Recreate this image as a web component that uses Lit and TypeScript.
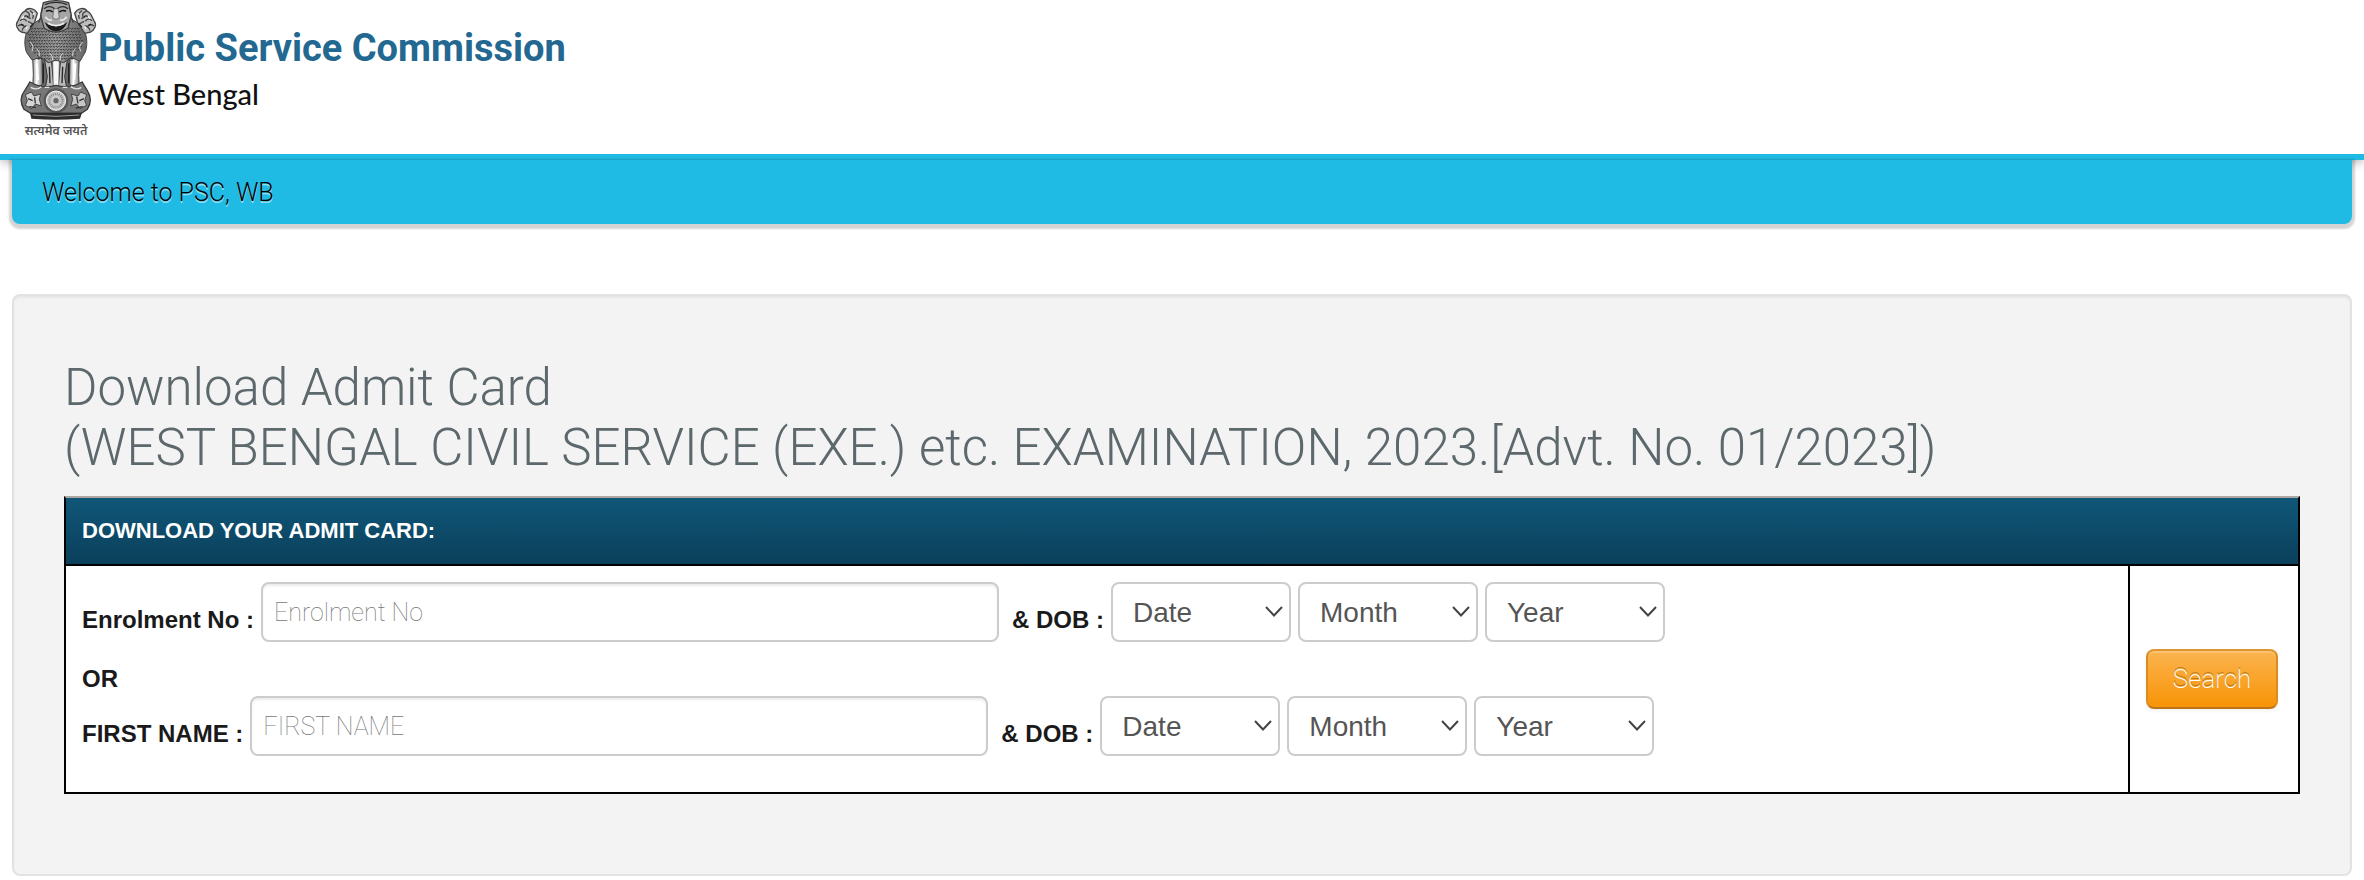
import { LitElement, html, svg, css } from "lit";
import { customElement } from "lit/decorators.js";

const MONTHS = ["01", "02", "03", "04", "05", "06", "07", "08", "09", "10", "11", "12"];
const DAYS = Array.from({ length: 31 }, (_, i) => String(i + 1).padStart(2, "0"));
const YEARS = Array.from({ length: 50 }, (_, i) => String(2005 - i));

// Rows of short curls that fill the mane between the shoulders.
const maneCurls = () => {
  const out: string[] = [];
  for (let row = 0; row < 11; row++) {
    const y = 84 + row * 9;
    const inset = row < 6 ? Math.max(0, 3 - row) * 3 : (row - 5) * 6;
    const shift = row % 2 ? 5 : 0;
    for (let x = 82 + inset + shift; x < 246 - inset; x += 10) {
      out.push(`M${x} ${y}q4 7 8 1`);
    }
  }
  return out.join("");
};

@customElement("state-emblem")
export class StateEmblem extends LitElement {
  static styles = css`
    :host { display: block; }
    svg { display: block; width: 96px; height: 148px; overflow: visible; }
    .motto { font-family: "Noto Sans Devanagari", "Noto Sans", sans-serif; font-size: 37px; font-weight: 600; fill: #555; }
  `;

  private sideLion(flip: boolean) {
    return svg`
      <g transform=${flip ? "translate(336 0) scale(-1 1)" : ""} fill="none" stroke="#444" stroke-width="4">
        <path d="M52 66C46 74 52 90 64 96L82 100L104 66L112 40C102 22 82 22 74 34C62 38 60 52 52 66Z" fill="#bdbdbd" />
        <path d="M76 34q14 2 12 16M60 62q12-10 20 2M54 78q12-8 20 2M66 92q4-14 16-14M90 32q14 8 8 24M84 64l14 8M82 50l10 6" />
        <path d="M72 50q8-6 12 2M62 72l8 4M90 82l10-12" stroke="#222" />
        <path d="M66 56l6-8M78 88l4-10M98 44l6-4" stroke="#f2f2f2" />
      </g>`;
  }

  render() {
    return html`
      <svg viewBox="0 0 288 444" role="img" aria-label="State Emblem of India">
        <defs>
          <linearGradient id="fur" x1="0" x2="1">
            <stop offset="0" stop-color="#6d6d6d" />
            <stop offset=".5" stop-color="#9b9b9b" />
            <stop offset="1" stop-color="#646464" />
          </linearGradient>
          <linearGradient id="leg" x1="0" x2="1">
            <stop offset="0" stop-color="#8d8d8d" />
            <stop offset=".4" stop-color="#fff" />
            <stop offset="1" stop-color="#777" />
          </linearGradient>
        </defs>

        <path d="M104 168L100 262H236L232 168Z" fill="#686868" />
        <path d="M98 170q14 10 28 4l2 76q-8 14-30 14l2-40Z" fill="url(#leg)" stroke="#444" stroke-width="3" />
        <path d="M238 170q-14 10-28 4l-2 76q8 14 30 14l-2-40Z" fill="url(#leg)" stroke="#444" stroke-width="3" />
        <path d="M134 180q14 14 20 0l8 84h-26l6-34Z" fill="#bbb" stroke="#333" stroke-width="3" />
        <path d="M202 180q-14 14-20 0l-8 84h26l-6-34Z" fill="#bbb" stroke="#333" stroke-width="3" />
        <path d="M158 182h20l-2 82h-16Z" fill="#f6f6f6" stroke="#555" stroke-width="2" />
        <path d="M130 190v60M206 190v60M148 200l2 50M188 200l-2 50" stroke="#222" stroke-width="4" />
        <path d="M110 190l4 50M226 190l-4 50" stroke="#fff" stroke-width="7" />

        <path d="M94 74C70 98 72 138 80 158L96 180L122 172L146 188L168 180L190 188L214 172L240 184L256 156C264 132 262 96 242 74L206 52H130Z" fill="url(#fur)" stroke="#444" stroke-width="3" />
        <path d=${maneCurls()} fill="none" stroke="#333" stroke-width="3" />
        <path d="M90 126q14 12 6 28M248 126q-14 12-6 28M110 146q10 8 8 22M226 146q-10 8-8 22M150 160q8 6 8 20M188 160q-8 6-8 20" fill="none" stroke="#dadada" stroke-width="3" />

        ${this.sideLion(false)}
        ${this.sideLion(true)}

        <path d="M130 8Q168-4 206 8L214 46L204 84Q168 108 132 84L122 46Z" fill="#a5a5a5" stroke="#3c3c3c" stroke-width="4" />
        <path d="M134 14q34-14 68 0M132 26q16-12 32 0M172 26q16-12 32 0" fill="none" stroke="#2d2d2d" stroke-width="4" />
        <path d="M138 34q12-6 20 2M178 36q10-8 20-2" fill="none" stroke="#111" stroke-width="5" />
        <path d="M162 26l-4 28q10 8 20 0l-4-28Z" fill="#d2d2d2" stroke="#555" stroke-width="2" />
        <path d="M136 50q8 12 20 10M200 50q-8 12-20 10" fill="none" stroke="#e5e5e5" stroke-width="5" />
        <path d="M134 66Q168 92 202 66Q192 94 168 94Q144 94 134 66Z" fill="#1c1c1c" />
        <path d="M144 70q24 14 48 0" fill="none" stroke="#eee" stroke-width="5" />
        <path d="M124 46l-8 22M212 46l8 22M128 20l-4 20M208 20l4 20" fill="none" stroke="#444" stroke-width="4" />

        <path d="M90 246Q128 268 168 256Q208 268 246 246L262 272Q280 300 262 328L244 340H92L72 328Q54 298 74 272Z" fill="#777" stroke="#3a3a3a" stroke-width="4" />
        <path d="M92 262q18 10 32-2M212 260q18 12 32 2M134 262h14M188 262h14" fill="none" stroke="#e2e2e2" stroke-width="4" />
        <path d="M76 284l18-8 8 12 20-6-4 16 6 20-18-6-10 14-20-10 6-14Z" fill="#d6d6d6" stroke="#444" stroke-width="3" />
        <path d="M260 284l-18-8-8 12-20-6 4 16-6 20 18-6 10 14 20-10-6-14Z" fill="#c6c6c6" stroke="#444" stroke-width="3" />
        <path d="M84 296l14 6M104 292l2 18M252 296l-14 6M230 290l4 20M88 320l20 2M248 320l-20 4" stroke="#333" stroke-width="4" />
        <circle cx="168" cy="302" r="37" fill="#555" />
        <circle cx="168" cy="302" r="29" fill="#c9c9c9" stroke="#efefef" stroke-width="3" />
        <circle cx="168" cy="302" r="20" fill="none" stroke="#858585" stroke-width="7" stroke-dasharray="3 3" />
        <circle cx="168" cy="302" r="8" fill="#666" />
        <path d="M90 338H246L240 356Q168 362 94 356Z" fill="#2c2c2c" />
        <path d="M98 345q70 8 140 0" fill="none" stroke="#999" stroke-width="3" />
        <text class="motto" x="74" y="405">सत्यमेव जयते</text>
      </svg>`;
  }
}

@customElement("dob-fields")
export class DobFields extends LitElement {
  static styles = css`
    :host { display: flex; align-items: flex-end; gap: 7px; }
    .caption { font-weight: 700; line-height: 44px; white-space: nowrap; }
    select {
      appearance: none;
      box-sizing: border-box;
      width: 180px;
      height: 60px;
      padding: 0 40px 0 20px;
      border: 2px solid #ccc;
      border-radius: 8px;
      color: #555;
      font: 28px "Liberation Sans", Arial, sans-serif;
      background: #fff url("data:image/svg+xml,%3Csvg xmlns='http://www.w3.org/2000/svg' width='18' height='12' fill='none' stroke='%23444' stroke-width='2'%3E%3Cpath d='M1 1L9 9.500L17 1'/%3E%3C/svg%3E") no-repeat right 6px center;
    }
  `;

  private list(name: string, values: string[]) {
    return html`<select aria-label=${name}>
      <option>${name}</option>
      ${values.map((v) => html`<option>${v}</option>`)}
    </select>`;
  }

  render() {
    return html`
      <span class="caption">&amp; DOB :</span>
      ${this.list("Date", DAYS)} ${this.list("Month", MONTHS)} ${this.list("Year", YEARS)}
    `;
  }
}

@customElement("app-root")
export class AppRoot extends LitElement {
  static styles = css`
    :host {
      display: block;
      background: #fff;
      color: #1a1a1a;
      font: 24px "Liberation Sans", Arial, sans-serif;
    }
    .masthead {
      display: flex;
      gap: 2px;
      height: 154px;
      border-bottom: 6px solid #1fbbe4;
      box-shadow: 0 2px 10px rgba(0, 0, 0, 0.3);
    }
    .names { padding-top: 25px; }
    .org { color: #226891; font: 700 38px/46px Roboto, sans-serif; }
    .state { color: #111; font: 500 29px/46px Lato, sans-serif; }
    .content { position: relative; padding: 0 12px 4px; }
    .welcome {
      padding: 2px 30px 0;
      border-radius: 0 0 8px 8px;
      background: #1fbbe4;
      box-shadow: 0 2px 2px 3px rgba(0, 0, 0, 0.17);
      color: #000;
      font: 300 25px/62px Roboto, sans-serif;
      text-shadow: 0 2px 0 rgba(255, 255, 255, 0.5);
    }
    .panel {
      margin-top: 70px;
      padding: 62px 50px 80px;
      border: 2px solid #e2e2e2;
      border-radius: 8px;
      background: #f3f3f3;
      box-shadow: inset 0 2px 2px rgba(0, 0, 0, 0.05);
    }
    h1 {
      margin: 0 0 18px;
      color: #5c686c;
      font: 300 51px/60px Roboto, sans-serif;
    }
    .card {
      border: 2px solid #000;
      border-top-color: #aea79f;
      background: #fff;
    }
    h2 {
      margin: 0;
      padding: 16px;
      border-bottom: 2px solid #000;
      background: linear-gradient(#105678, #0a405b);
      color: #fff;
      font-size: 22px;
      line-height: 34px;
    }
    form { display: grid; grid-template-columns: 1fr 170px; }
    .fields { padding: 16px 16px 36px; }
    .row { display: flex; align-items: flex-end; }
    label { margin-right: 7px; font-weight: 700; line-height: 44px; white-space: nowrap; }
    .or { margin-top: 20px; font-weight: 700; line-height: 34px; }
    input {
      box-sizing: border-box;
      flex: 0 1 738px;
      min-width: 0;
      height: 60px;
      margin-right: 13px;
      padding: 0 11px;
      border: 2px solid #ccc;
      border-radius: 8px;
      background: #fff;
      box-shadow: inset 0 2px 2px rgba(0, 0, 0, 0.075);
      color: #555;
      font: 100 25px Roboto, sans-serif;
    }
    input::placeholder { color: #777; opacity: 1; }
    .action {
      display: flex;
      align-items: center;
      padding-left: 16px;
      border-left: 2px solid #000;
    }
    button {
      width: 132px;
      height: 60px;
      padding: 0;
      border: 2px solid;
      border-color: #e0962e #dc8b20 #bd7419;
      border-radius: 8px;
      background: linear-gradient(#fbb450, #f89406);
      box-shadow: inset 0 2px 0 rgba(255, 255, 255, 0.2), 0 2px 4px rgba(0, 0, 0, 0.05);
      color: #fff;
      font: 200 26px Roboto, sans-serif;
      text-shadow: 0 -2px 0 rgba(0, 0, 0, 0.25);
    }
  `;

  render() {
    return html`
      <header class="masthead">
        <state-emblem></state-emblem>
        <div class="names">
          <div class="org">Public Service Commission</div>
          <div class="state">West Bengal</div>
        </div>
      </header>
      <main class="content">
        <div class="welcome">Welcome to PSC, WB</div>
        <section class="panel">
          <h1>
            Download Admit Card<br />(WEST BENGAL CIVIL SERVICE (EXE.) etc. EXAMINATION, 2023.[Advt. No. 01/2023])
          </h1>
          <div class="card">
            <h2>DOWNLOAD YOUR ADMIT CARD:</h2>
            <form @submit=${(e: Event) => e.preventDefault()}>
              <div class="fields">
                <div class="row">
                  <label for="enrolment">Enrolment No :</label>
                  <input id="enrolment" type="text" placeholder="Enrolment No" />
                  <dob-fields></dob-fields>
                </div>
                <div class="or">OR</div>
                <div class="row">
                  <label for="first-name">FIRST NAME :</label>
                  <input id="first-name" type="text" placeholder="FIRST NAME" />
                  <dob-fields></dob-fields>
                </div>
              </div>
              <div class="action"><button type="submit">Search</button></div>
            </form>
          </div>
        </section>
      </main>
    `;
  }
}
